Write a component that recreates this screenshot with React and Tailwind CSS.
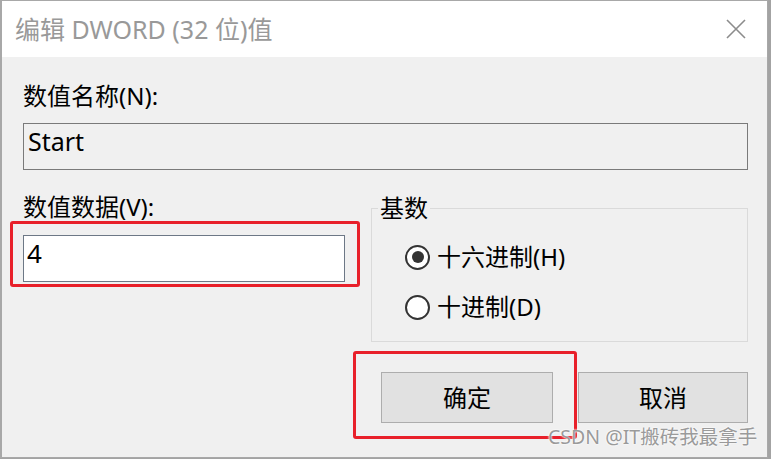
import React from 'react';

const Radio = ({ checked, label }) => (
  <div className="flex items-center h-[32px] gap-[7px]">
    <div className="w-[25px] h-[25px] rounded-full border-2 border-[#333] bg-white flex items-center justify-center">
      {checked && <div className="w-[12px] h-[12px] rounded-full bg-[#333]"></div>}
    </div>
    <span className="text-[24px] leading-[32px] text-black">{label}</span>
  </div>
);

const App = () => {
  return (
    <div className="relative w-[771px] h-[459px] bg-[#a3a3a3] overflow-hidden font-['Noto_Sans','Noto_Sans_CJK_SC',sans-serif]">
      <div className="w-[768px] h-[458px] flex flex-col bg-[#f0f0f0] border-t border-l-2 border-r border-b border-[#a8a8a8]">
        {/* title bar */}
        <div className="h-[56px] bg-white flex items-center justify-between pl-[13px] pr-[21px]">
          <span className="text-[25px] leading-[32px] text-[#999999] whitespace-nowrap">
            编辑 DWORD (32 位)值
          </span>
          <svg width="20" height="20" viewBox="0 0 20 20">
            <path d="M1 1 L19 19 M19 1 L1 19" stroke="#8c8c8c" strokeWidth="1.6" fill="none" />
          </svg>
        </div>

        {/* body */}
        <div className="flex flex-col pl-[21px] pt-[23px] text-black">
          <div className="text-[24px] leading-[32px]">数值名称(N):</div>
          <div className="mt-[11px] w-[725px] h-[47px] border border-[#7a7a7a] pt-[5px] pl-[4px] text-[25px] leading-[25px]">
            Start
          </div>

          <div className="flex mt-[21px]">
            <div className="flex flex-col w-[322px]">
              <div className="text-[24px] leading-[32px]">数值数据(V):</div>
              <div className="mt-[12px] h-[47px] bg-white border border-[#6d7886] pt-[4px] pl-[3px] text-[26px] leading-[26px]">
                4
              </div>
            </div>

            <div className="relative ml-[26px] mt-[17px] w-[377px] h-[134px] border border-[#dadada] pt-[32px] pl-[33px] flex flex-col gap-[18px]">
              <span className="absolute -top-[17px] left-[6px] px-[2px] bg-[#f0f0f0] text-[24px] leading-[32px]">基数</span>
              <Radio checked label="十六进制(H)" />
              <Radio label="十进制(D)" />
            </div>
          </div>

          <div className="flex mt-[30px] pl-[358px] gap-[25px]">
            <button className="w-[172px] h-[51px] bg-[#e1e1e1] border border-[#adadad] text-[24px] text-black">确定</button>
            <button className="w-[170px] h-[51px] bg-[#e1e1e1] border border-[#adadad] text-[24px] text-black">取消</button>
          </div>
        </div>
      </div>

      {/* annotations */}
      <div className="absolute left-[10px] top-[221px] w-[350px] h-[66px] border-[3px] border-[#e8202a] rounded-[3px]"></div>
      <div className="absolute left-[353px] top-[351px] w-[224px] h-[88px] border-[3px] border-[#e8202a] rounded-[3px]"></div>
      <div className="absolute left-[548px] top-[423px] text-[19.5px] leading-[28px] text-[#9a9a9a] whitespace-nowrap [text-shadow:0_0_2px_#fff,0_0_2px_#fff]">
        CSDN @IT搬砖我最拿手
      </div>
    </div>
  );
};

export default App;
